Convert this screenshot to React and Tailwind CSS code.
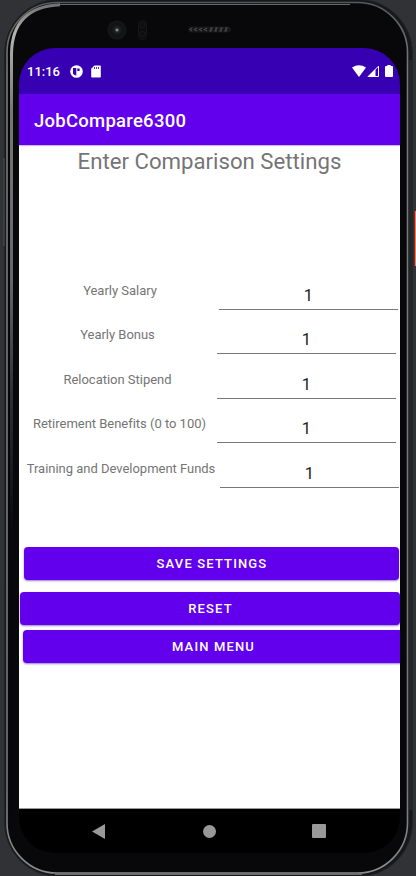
const rows = [
  { label: 'Yearly Salary', cell: 'w-[202px]', line: 'ml-[-2px]', value: '1' },
  { label: 'Yearly Bonus', cell: 'w-[197px]', line: 'ml-[1px]', value: '1' },
  { label: 'Relocation Stipend', cell: 'w-[197px]', line: 'ml-[1px]', value: '1' },
  { label: 'Retirement Benefits (0 to 100)', cell: 'w-[201px]', line: 'ml-[-3px]', value: '1' },
  { label: 'Training and Development Funds', cell: 'w-[204px]', line: 'ml-[-3px]', value: '1' },
];

function PhoneFrame() {
  return (
    <svg className="absolute inset-0" width="416" height="876" viewBox="0 0 416 876" fill="none">
      <defs>
        <linearGradient id="rim" gradientUnits="userSpaceOnUse" x1="0" y1="0" x2="0" y2="876">
          <stop offset="0" stopColor="#55575a" />
          <stop offset="0.08" stopColor="#77797b" />
          <stop offset="0.9" stopColor="#76787a" />
          <stop offset="1" stopColor="#8c8c8e" />
        </linearGradient>
        <linearGradient id="shine" gradientUnits="userSpaceOnUse" x1="0" y1="0" x2="0" y2="560">
          <stop offset="0" stopColor="#66686a" />
          <stop offset="0.06" stopColor="#b4b4b0" />
          <stop offset="0.2" stopColor="#777777" />
          <stop offset="0.5" stopColor="#66676a" />
          <stop offset="0.7" stopColor="#303134" />
          <stop offset="0.95" stopColor="#09090b" />
        </linearGradient>
        <radialGradient id="lens">
          <stop offset="0" stopColor="#6a6c6e" />
          <stop offset="0.25" stopColor="#202224" />
          <stop offset="0.6" stopColor="#111214" />
          <stop offset="1" stopColor="#161719" />
        </radialGradient>
      </defs>
      <rect x="4.5" y="-.5" width="408" height="877" rx="54" fill="#17181a" stroke="#202224" />
      <rect x="409" y="60" width="4" height="750" fill="#242729" />
      <rect x="7" y="2.5" width="400.5" height="870.5" rx="50" fill="#08080a" stroke="url(#rim)" strokeWidth="1.6" />
      <path d="M11.5 560V54Q12 7 60 4.8" stroke="url(#shine)" strokeWidth="3" />
      <path d="M60 4.5H350" stroke="#66686a" strokeWidth="1" />
      <path d="M9.5 820V60" stroke="#050506" strokeWidth="1" />
      <path d="M4 158V246" stroke="#4b4e51" strokeWidth="1" />
      <path d="M55 874.5H362" stroke="#6c6c6e" strokeWidth="1" />
      <rect x="415" y="211" width="1" height="55" fill="#ee765e" />
      <rect x="414" y="211" width="1" height="55" fill="#772e24" />
      <circle cx="117" cy="30" r="9.5" fill="url(#lens)" />
      <circle cx="117" cy="30" r="1.3" fill="#85888a" />
      <rect x="138.5" y="20.5" width="8" height="19" rx="3" fill="#0d0d0f" stroke="#151518" />
      <circle cx="142.5" cy="25" r="2.5" stroke="#19191c" />
      <circle cx="142.5" cy="34" r="2.5" stroke="#19191c" />
      <rect x="188" y="26.5" width="43" height="6" rx="3" fill="#171719" />
      <path d="M192 28l-2 1.5L192 31M197 28l-2.5 1.5L197 31M202 28l-2.5 1.5L202 31M207 28l-2.5 1.5L207 31M210 28h2l-2 3h2M215 28h2l-2 3h2M220 28h2l-2 3h2M225 28h2l-2 3h2" stroke="#48484a" strokeWidth="1.2" />
    </svg>
  );
}

function StatusBar() {
  return (
    <header className="flex h-[46px] shrink-0 items-center bg-[#3700b3] pl-[8px] pr-[7px] text-white">
      <span className="w-[43px] whitespace-nowrap pt-px text-[13px] font-medium">11:16</span>
      <svg width="13" height="13" viewBox="0 0 13 13">
        <circle cx="6.5" cy="6.5" r="6.3" fill="#fff" />
        <path d="M3 3H6.3V10.6Q4 10.5 3 8.6Z" fill="#3700b3" />
        <path d="M7.3 3.4H9.6V5.9H7.3Z" fill="#3700b3" />
      </svg>
      <svg className="ml-[8px]" width="10" height="13" viewBox="0 0 10 13">
        <path d="M3.4 .5H9Q9.8 .5 9.8 1.3V11.7Q9.8 12.5 9 12.5H1Q.2 12.5 .2 11.7V3.7Z" fill="#fff" />
        <path d="M3.5 2V4M5.5 2V4M7.5 2V4" stroke="#3700b3" strokeWidth=".8" />
      </svg>
      <svg className="ml-auto" width="14" height="12" viewBox="0 0 14 12">
        <path d="M0 2.6Q7 -2.2 14 2.6L7 12Z" fill="#fff" />
      </svg>
      <svg className="ml-[1px]" width="13" height="12" viewBox="0 0 13 12">
        <path d="M1.2 11.5L11.5 1.2V11.5Z" fill="none" stroke="#fff" strokeWidth="1" />
        <path d="M.5 12L8.5 4V12Z" fill="#fff" />
      </svg>
      <svg className="ml-[5px]" width="8" height="12" viewBox="0 0 8 12">
        <path d="M2.3 0H5.7V1H7Q8 1 8 2V11Q8 12 7 12H1Q0 12 0 11V2Q0 1 1 1H2.3Z" fill="#fff" />
      </svg>
    </header>
  );
}

function SettingRow({ label, cell, line, value }) {
  return (
    <div className="flex h-[44.5px] items-start">
      <label className={`${cell} shrink-0 whitespace-nowrap pt-[0.5px] text-center text-[13px] leading-[18px] tracking-[-0.02px] text-[#757575]`}>{label}</label>
      <div className={`${line} mt-[2.5px] flex h-[26px] w-[179px] shrink-0 items-end justify-center border-b border-[#777] pb-[2px] text-[16.5px] leading-[22px] text-[#202020]`}>
        {value}
      </div>
    </div>
  );
}

const button = 'flex h-[33px] items-center justify-center rounded-[4px] bg-[#6200ee] pl-px pt-px text-[13px] font-medium tracking-[1.15px] text-white shadow-[0_1px_2px_rgba(60,0,150,0.5)]';

export default function App() {
  return (
    <div className="relative h-[876px] w-[416px] overflow-hidden bg-[#303235] font-['Roboto',sans-serif]">
      <PhoneFrame />
      <div className="relative pl-[19px] pt-[48px]">
        <div className="flex h-[805px] w-[381px] flex-col overflow-hidden rounded-[36px]">
          <StatusBar />
          <div className="relative flex h-[51px] shrink-0 items-center bg-[#6200ee] pl-[15px] pt-[4px] text-[18.5px] font-medium tracking-[0.26px] text-white shadow-[0_1px_1px_#d0b8f5]">
            JobCompare6300
          </div>
          <main className="h-[663px] shrink-0 bg-white">
            <h1 className="pt-[3px] text-center text-[22.2px] leading-[27px] text-[#757575]">Enter Comparison Settings</h1>
            <section className="mt-[106px] h-[266px]">
              {rows.map((row) => (
                <SettingRow key={row.label} {...row} />
              ))}
            </section>
            <div className="flex flex-col">
              <button className={`${button} ml-[5px] w-[375px]`}>SAVE SETTINGS</button>
              <button className={`${button} ml-[1px] mt-[12px] w-[380px]`}>RESET</button>
              <button className={`${button} ml-[4px] mt-[4.5px] w-[380px]`}>MAIN MENU</button>
            </div>
          </main>
          <nav className="flex h-[45px] shrink-0 items-center border-t border-[#999] bg-black">
            <svg className="ml-[73px]" width="13" height="15" viewBox="0 0 13 15"><path d="M0 7.5L13 0V15Z" fill="#999" /></svg>
            <span className="ml-[98px] size-[13px] rounded-full bg-[#999]" />
            <span className="ml-[96px] size-[14px] rounded-[1px] bg-[#999]" />
          </nav>
        </div>
      </div>
    </div>
  );
}
